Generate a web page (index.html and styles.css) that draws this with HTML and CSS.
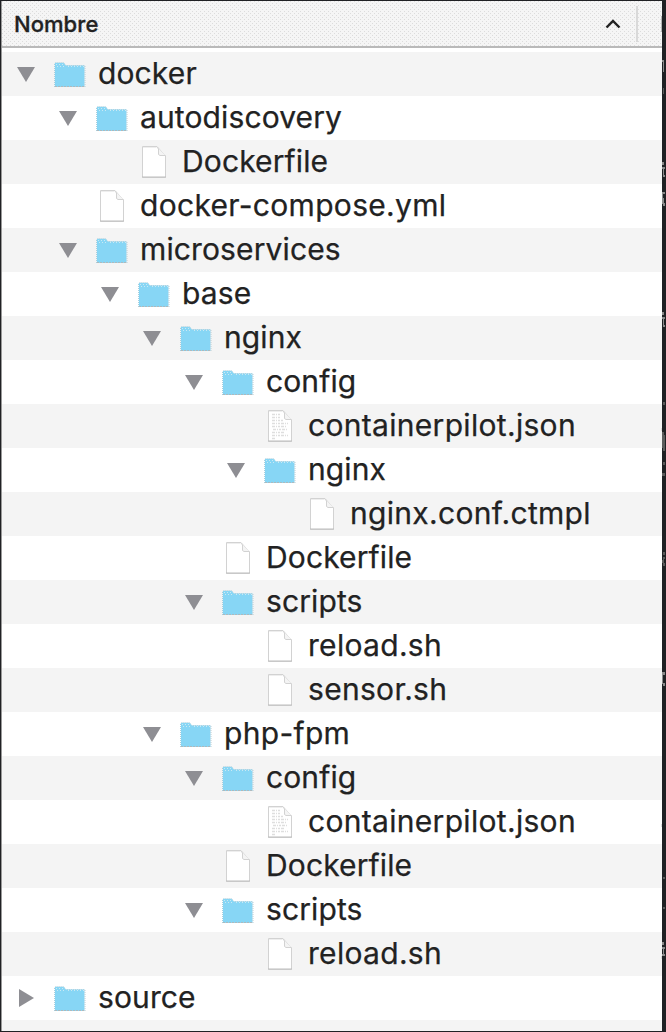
FILE: index.html
```html
<!DOCTYPE html>
<html lang="es">
<head>
<meta charset="utf-8">
<title>Nombre</title>
<link rel="stylesheet" href="styles.css">
</head>
<body>
<svg class="defs" aria-hidden="true">
  <defs>
    <symbol id="open" viewBox="0 0 18 16"><path d="M0 0H18L9 15Z" fill="#8e8e93"/></symbol>
    <symbol id="closed" viewBox="0 0 18 18"><path d="M2 0V18L17 9Z" fill="#8e8e93"/></symbol>
    <symbol id="folder" viewBox="0 0 32 26">
      <path d="M1 1H9.500L12 3.500H30.500V25H1Z" fill="#87d6f5"/>
      <path d="M.5 25V1.500L1.500.5H9.500L12 3.500H30.500" fill="none" stroke="#a9cfdd" stroke-dasharray="1 1"/>
      <path d="M2 2.500H10M3 4.500H12M14 4.500H30" stroke="#c9e9f4" stroke-dasharray="1 2"/>
      <path d="M31 4V25" stroke="#bdcdd3" stroke-dasharray="1 1"/>
      <path d="M1 24.500H31" stroke="#aeb9bd" stroke-dasharray="2 1"/>
    </symbol>
    <symbol id="file" viewBox="0 0 25 33">
      <path d="M.5 .5H15L23.500 10V31.500H.5Z" fill="#fff" stroke="#d2d2d2"/>
      <path d="M14.500 .5L16.500 3V8.500L18 9.500H23.500" fill="#f4f4f4" stroke="#d2d2d2"/>
      <path d="M1 1.500H14" stroke="#eee"/>
      <path d="M0 31H24" stroke="#bdbdbd"/>
    </symbol>
    <symbol id="textfile" viewBox="0 0 25 33">
      <use href="#file"/>
      <path d="M4 4.500H13M4 7.500H13M4 10.500H15M4 13.500H20M4 16.500H18M5 19.500H20M4 22.500H17M4 25.500H20M4 28.500H8" stroke="#dedede" stroke-width="1.500" stroke-dasharray="3 1 1 1 2 1"/>
    </symbol>
  </defs>
</svg>
<main class="window">
  <header class="header">
    <span class="title">Nombre</span>
    <svg class="sort" viewBox="0 0 16 10"><path d="M1.500 8.500L8 2L14.500 8.500" fill="none" stroke="#222" stroke-width="2.400"/></svg>
    <span class="divider"></span>
  </header>
  <div class="tree">
    <div class="row d0"><svg class="arrow"><use href="#open"/></svg><svg class="folder"><use href="#folder"/></svg><span class="name">docker</span></div>
    <div class="row d1"><svg class="arrow"><use href="#open"/></svg><svg class="folder"><use href="#folder"/></svg><span class="name">autodiscovery</span></div>
    <div class="row d2"><span class="arrow"></span><svg class="file"><use href="#file"/></svg><span class="name">Dockerfile</span></div>
    <div class="row d1"><span class="arrow"></span><svg class="file"><use href="#file"/></svg><span class="name long">docker-compose.yml</span></div>
    <div class="row d1"><svg class="arrow"><use href="#open"/></svg><svg class="folder"><use href="#folder"/></svg><span class="name">microservices</span></div>
    <div class="row d2"><svg class="arrow"><use href="#open"/></svg><svg class="folder"><use href="#folder"/></svg><span class="name">base</span></div>
    <div class="row d3"><svg class="arrow"><use href="#open"/></svg><svg class="folder"><use href="#folder"/></svg><span class="name">nginx</span></div>
    <div class="row d4"><svg class="arrow"><use href="#open"/></svg><svg class="folder"><use href="#folder"/></svg><span class="name">config</span></div>
    <div class="row d5"><span class="arrow"></span><svg class="file"><use href="#textfile"/></svg><span class="name long">containerpilot.json</span></div>
    <div class="row d5"><svg class="arrow"><use href="#open"/></svg><svg class="folder"><use href="#folder"/></svg><span class="name">nginx</span></div>
    <div class="row d6"><span class="arrow"></span><svg class="file"><use href="#file"/></svg><span class="name long">nginx.conf.ctmpl</span></div>
    <div class="row d4"><span class="arrow"></span><svg class="file"><use href="#file"/></svg><span class="name">Dockerfile</span></div>
    <div class="row d4"><svg class="arrow"><use href="#open"/></svg><svg class="folder"><use href="#folder"/></svg><span class="name">scripts</span></div>
    <div class="row d5"><span class="arrow"></span><svg class="file"><use href="#file"/></svg><span class="name long">reload.sh</span></div>
    <div class="row d5"><span class="arrow"></span><svg class="file"><use href="#file"/></svg><span class="name long">sensor.sh</span></div>
    <div class="row d3"><svg class="arrow"><use href="#open"/></svg><svg class="folder"><use href="#folder"/></svg><span class="name long">php-fpm</span></div>
    <div class="row d4"><svg class="arrow"><use href="#open"/></svg><svg class="folder"><use href="#folder"/></svg><span class="name">config</span></div>
    <div class="row d5"><span class="arrow"></span><svg class="file"><use href="#textfile"/></svg><span class="name long">containerpilot.json</span></div>
    <div class="row d4"><span class="arrow"></span><svg class="file"><use href="#file"/></svg><span class="name">Dockerfile</span></div>
    <div class="row d4"><svg class="arrow"><use href="#open"/></svg><svg class="folder"><use href="#folder"/></svg><span class="name">scripts</span></div>
    <div class="row d5"><span class="arrow"></span><svg class="file"><use href="#file"/></svg><span class="name long">reload.sh</span></div>
    <div class="row d0"><svg class="arrow side"><use href="#closed"/></svg><svg class="folder"><use href="#folder"/></svg><span class="name">source</span></div>
    <div class="row d0"></div>
  </div>
</main>
<svg class="edge" viewBox="0 0 5 1032">
  <path d="M0 16h1v16H0z" fill="#b5b5b5"/>
  <path d="M1 60h2v12H2V62H1zM1 162h2v3H1zM1 167h3v2H3v6h1v2H2v-8H1zM1 192h3v2H2v4h1v5h1v3H2v-2H1zM1 312h2v3H1zM1 317h3v2H3v6h1v2H2v-8H1zM1 672h3v3H2v8h2v3H2v-2H1zM1 942h2v3H1zM1 947h3v2H3v5h1v2H1v-2h1v-5H1z" fill="#8c8c8c"/>
  <path d="M2 88h1v6H2zM2 402h2v3H2zM1 432h2v3h1v16H2v-3H1zM2 462h2v3H2zM1 473h3v3H1zM2 552h2v3H2zM1 560h1v-3h2v2H3v4h1v3H2v-3H1zM2 877h2v2H2zM2 907h2v2H2z" fill="#5c5c5c"/>
  <path d="M0 428h1v3H0zM0 824h1v3H0zM0 956h1v3H0z" fill="#ddd"/>
</svg>
</body>
</html>
```
FILE: styles.css
```css
* { box-sizing: border-box; }
body { margin: 0; background: #202124; font-family: Inter, "Liberation Sans", sans-serif; color: #222; }
.defs { position: absolute; width: 0; height: 0; }
.window { width: 666px; height: 1032px; border: solid #202124; border-width: 1px 4px 1px 1px; background: #fff; overflow: hidden; box-shadow: inset 1px 0 #999; }
.header {
  display: flex; align-items: center; height: 47px; margin-left: 1px;
  padding: 0 24px 0 12px; border-bottom: 2px solid #b9b9b9;
  background-color: #f5f5f5;
  background-image: linear-gradient(#dcdcdc, #dcdcdc), linear-gradient(#dcdcdc, #dcdcdc);
  background-size: 4px 4px;
  background-image: conic-gradient(from 0deg at 1px 1px, transparent 270deg, #dcdcdc 0), conic-gradient(from 0deg at 1px 1px, transparent 270deg, #dcdcdc 0);
  background-position: 0 0, 2px 2px;
}
.title { flex: 1; font-size: 22px; font-weight: 500; line-height: 44px; -webkit-text-stroke: 0.3px #222; letter-spacing: 0.05px; }
.sort { width: 16px; height: 10px; margin-right: 15px; }
.divider { width: 2px; height: 36px; background: #d9d9d9; }
.tree { padding-top: 4px; margin-left: 1px; }
.row { display: flex; align-items: center; height: 44px; }
.row:nth-child(odd) { background: #f4f4f4; }
.d0 { padding-left: 15px; }
.d1 { padding-left: 57px; }
.d2 { padding-left: 99px; }
.d3 { padding-left: 141px; }
.d4 { padding-left: 183px; }
.d5 { padding-left: 225px; }
.d6 { padding-left: 267px; }
.arrow { flex: none; width: 18px; height: 16px; margin: 2px 19px 0 0; }
.side { height: 18px; margin-top: 0; }
.folder { flex: none; width: 32px; height: 26px; margin: 2px 12px 0 0; }
.file { flex: none; width: 25px; height: 33px; margin: 1px 15px 0 4px; }
.name { font-size: 30px; line-height: 42px; padding-bottom: 2px; white-space: nowrap; letter-spacing: 0.12px; -webkit-text-stroke: 0.25px #222; }
.long { letter-spacing: 0.31px; }
.edge { position: absolute; left: 661px; top: 0; width: 5px; height: 1032px; }
```
